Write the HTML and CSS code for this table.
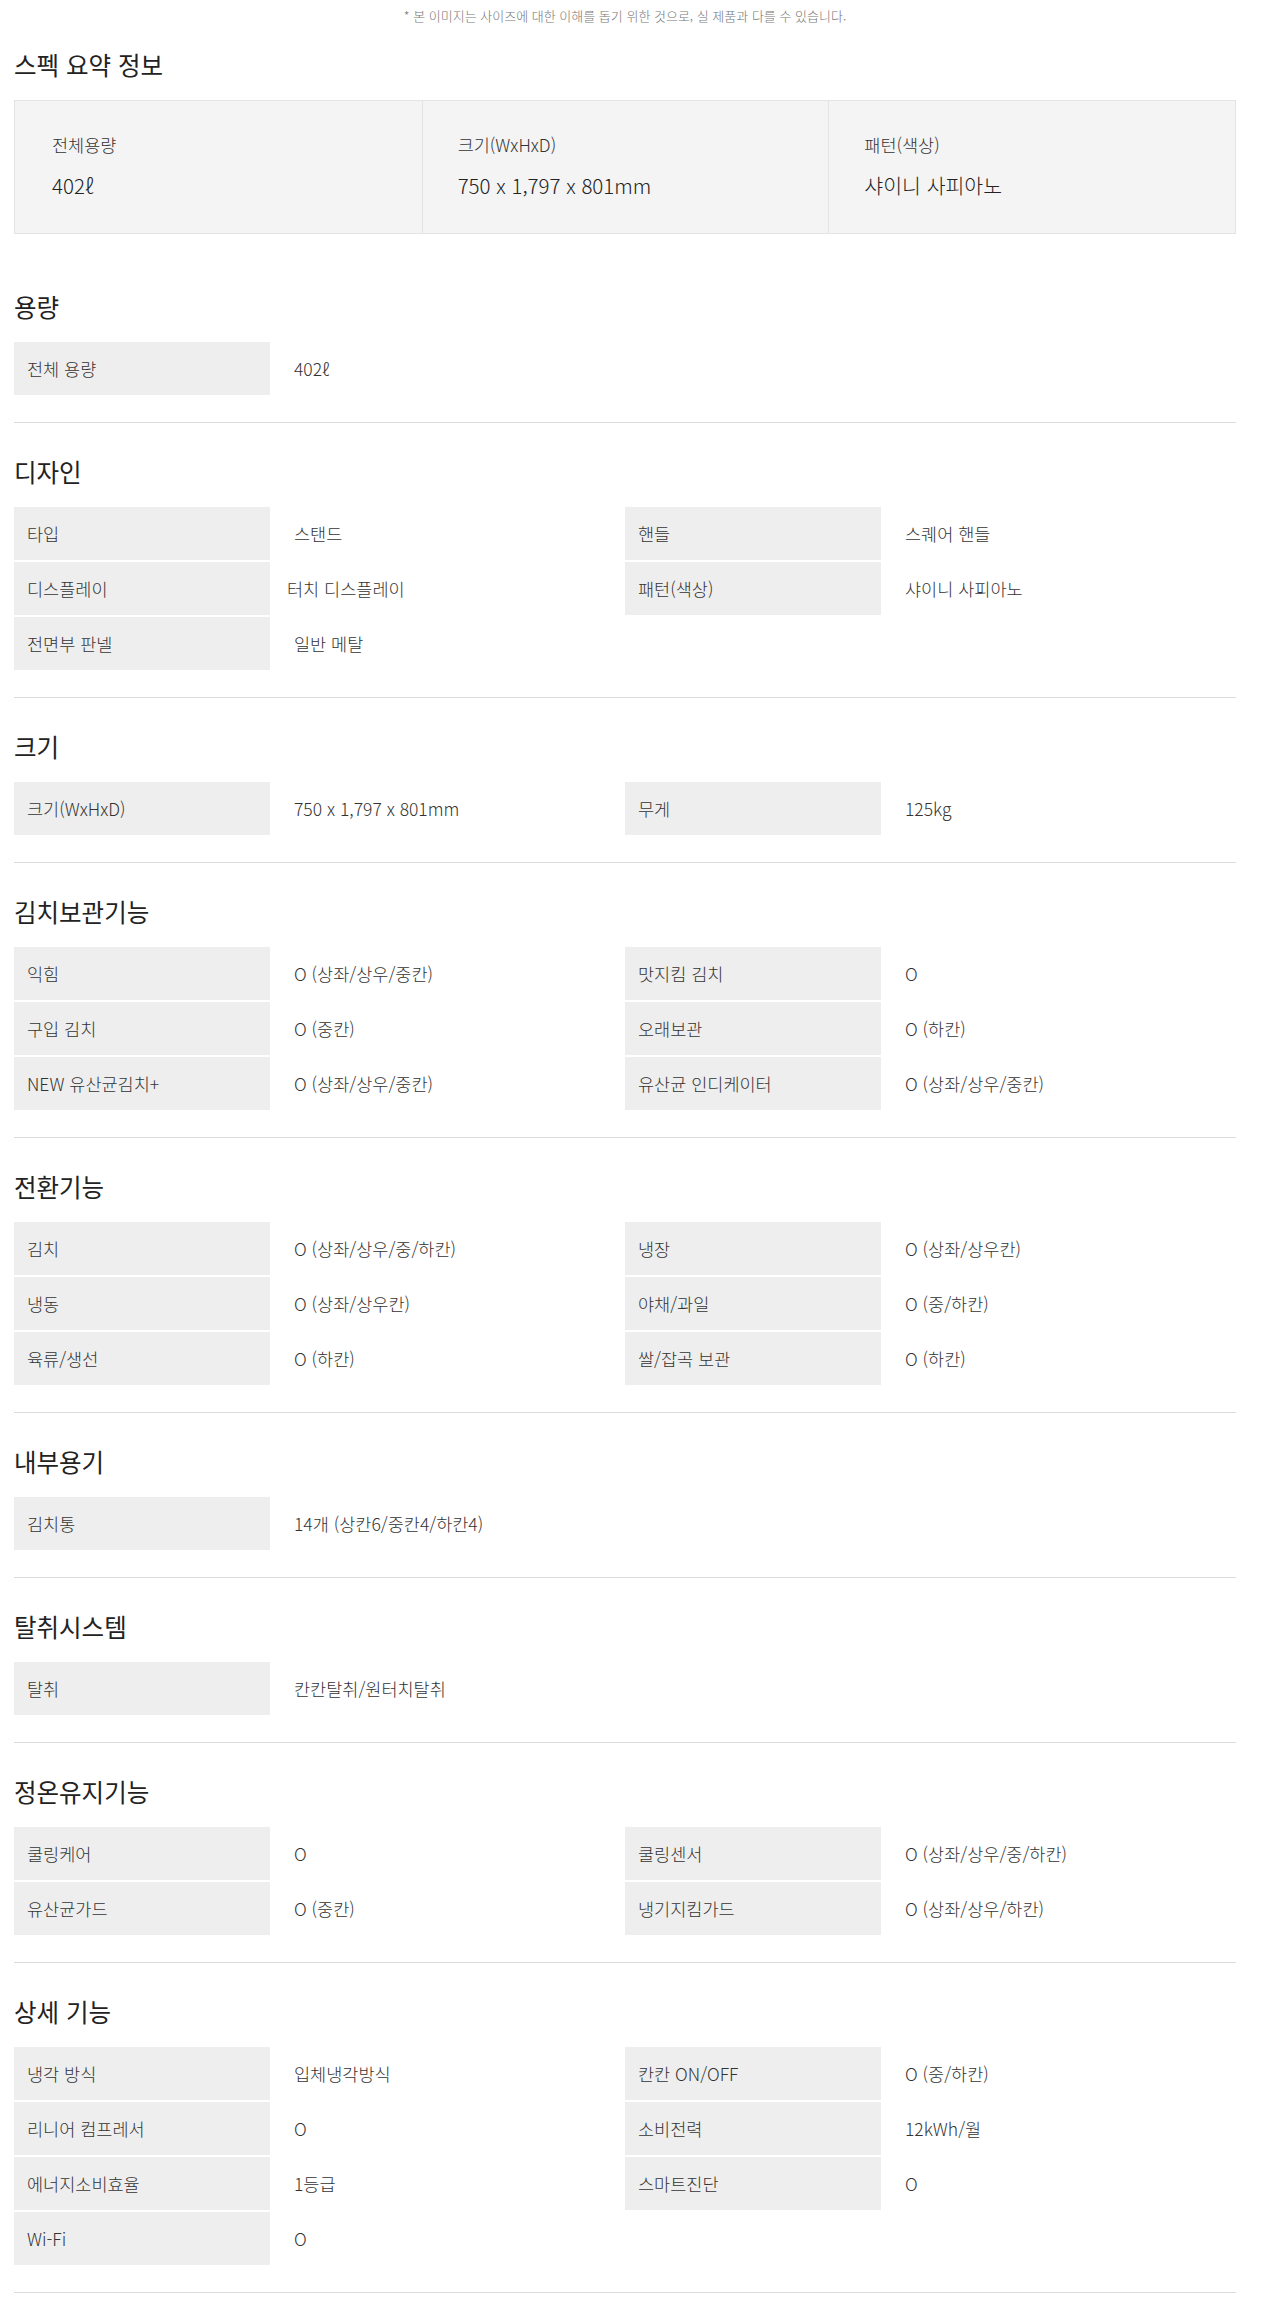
FILE: index.html
```html
<!DOCTYPE html>
<html lang="ko">
<head>
  <meta charset="UTF-8">
  <title>스펙</title>
  <link rel="stylesheet" href="styles.css">
</head>
<body>
  <div class="spec">
    <p class="notice">* 본 이미지는 사이즈에 대한 이해를 돕기 위한 것으로, 실 제품과 다를 수 있습니다.</p>

    <h2 class="title">스펙 요약 정보</h2>
    <div class="summary">
      <div class="summary-item">
        <div class="summary-label">전체용량</div>
        <div class="summary-value">402ℓ</div>
      </div>
      <div class="summary-item">
        <div class="summary-label">크기(WxHxD)</div>
        <div class="summary-value">750 x 1,797 x 801mm</div>
      </div>
      <div class="summary-item">
        <div class="summary-label">패턴(색상)</div>
        <div class="summary-value">샤이니 사피아노</div>
      </div>
    </div>

    <div class="section">
      <h2 class="title">용량</h2>
      <div class="rows">
        <div class="th">전체 용량</div><div class="td">402ℓ</div>
      </div>
    </div>

    <div class="section">
      <h2 class="title">디자인</h2>
      <div class="rows">
        <div class="th">타입</div><div class="td">스탠드</div>
        <div class="th">핸들</div><div class="td">스퀘어 핸들</div>
        <div class="th">디스플레이</div><div class="td shift">터치 디스플레이</div>
        <div class="th">패턴(색상)</div><div class="td">샤이니 사피아노</div>
        <div class="th">전면부 판넬</div><div class="td">일반 메탈</div>
      </div>
    </div>

    <div class="section">
      <h2 class="title">크기</h2>
      <div class="rows">
        <div class="th">크기(WxHxD)</div><div class="td">750 x 1,797 x 801mm</div>
        <div class="th">무게</div><div class="td">125kg</div>
      </div>
    </div>

    <div class="section">
      <h2 class="title">김치보관기능</h2>
      <div class="rows">
        <div class="th">익힘</div><div class="td">O (상좌/상우/중칸)</div>
        <div class="th">맛지킴 김치</div><div class="td">O</div>
        <div class="th">구입 김치</div><div class="td">O (중칸)</div>
        <div class="th">오래보관</div><div class="td">O (하칸)</div>
        <div class="th">NEW 유산균김치+</div><div class="td">O (상좌/상우/중칸)</div>
        <div class="th">유산균 인디케이터</div><div class="td">O (상좌/상우/중칸)</div>
      </div>
    </div>

    <div class="section">
      <h2 class="title">전환기능</h2>
      <div class="rows">
        <div class="th">김치</div><div class="td">O (상좌/상우/중/하칸)</div>
        <div class="th">냉장</div><div class="td">O (상좌/상우칸)</div>
        <div class="th">냉동</div><div class="td">O (상좌/상우칸)</div>
        <div class="th">야채/과일</div><div class="td">O (중/하칸)</div>
        <div class="th">육류/생선</div><div class="td">O (하칸)</div>
        <div class="th">쌀/잡곡 보관</div><div class="td">O (하칸)</div>
      </div>
    </div>

    <div class="section">
      <h2 class="title">내부용기</h2>
      <div class="rows">
        <div class="th">김치통</div><div class="td">14개 (상칸6/중칸4/하칸4)</div>
      </div>
    </div>

    <div class="section">
      <h2 class="title">탈취시스템</h2>
      <div class="rows">
        <div class="th">탈취</div><div class="td">칸칸탈취/원터치탈취</div>
      </div>
    </div>

    <div class="section">
      <h2 class="title">정온유지기능</h2>
      <div class="rows">
        <div class="th">쿨링케어</div><div class="td">O</div>
        <div class="th">쿨링센서</div><div class="td">O (상좌/상우/중/하칸)</div>
        <div class="th">유산균가드</div><div class="td">O (중칸)</div>
        <div class="th">냉기지킴가드</div><div class="td">O (상좌/상우/하칸)</div>
      </div>
    </div>

    <div class="section">
      <h2 class="title">상세 기능</h2>
      <div class="rows">
        <div class="th">냉각 방식</div><div class="td">입체냉각방식</div>
        <div class="th">칸칸 ON/OFF</div><div class="td">O (중/하칸)</div>
        <div class="th">리니어 컴프레서</div><div class="td">O</div>
        <div class="th">소비전력</div><div class="td">12kWh/월</div>
        <div class="th">에너지소비효율</div><div class="td">1등급</div>
        <div class="th">스마트진단</div><div class="td">O</div>
        <div class="th">Wi-Fi</div><div class="td">O</div>
      </div>
    </div>
  </div>
</body>
</html>
```

FILE: styles.css
```css
body {
  margin: 0;
  background: #fff;
  color: #333;
  font-family: "Noto Sans CJK KR", "Noto Sans", sans-serif;
  font-weight: 300;
}

.spec {
  width: 1222px;
  margin-left: 14px;
}

.notice {
  margin: 0;
  padding-top: 6px;
  font-size: 13px;
  line-height: 20px;
  color: #777;
  text-align: center;
}

.title {
  margin: 0 0 18px;
  font-size: 24.5px;
  line-height: 34px;
  font-weight: 400;
  color: #222;
}

.notice + .title { margin-top: 22px; }

.summary {
  display: grid;
  grid-template-columns: repeat(3, 1fr);
  background: #f4f4f4;
  border: 1px solid #e4e4e4;
  margin-bottom: 24px;
}

.summary-item {
  padding: 32px 0 33px 37px;
}
.summary-item + .summary-item {
  border-left: 1px solid #e4e4e4;
  padding-left: 35px;
}

.summary-label { font-size: 17.5px; line-height: 24px; color: #333; }
.summary-value { font-size: 20.5px; line-height: 30px; margin-top: 13px; color: #222; }

.section {
  padding: 32px 0 27px;
  border-bottom: 1px solid #dcdcdc;
}

.rows {
  display: grid;
  grid-template-columns: 256px 355px 256px 355px;
  grid-auto-rows: 53px;
  row-gap: 2px;
}

.th, .td {
  display: flex;
  align-items: center;
  font-size: 17.5px;
  white-space: nowrap;
}

.th {
  background: #eeeeee;
  padding-left: 13px;
  color: #333;
}
.td {
  padding-left: 24px;
  color: #333;
}
.td.shift { padding-left: 17px; }
```
